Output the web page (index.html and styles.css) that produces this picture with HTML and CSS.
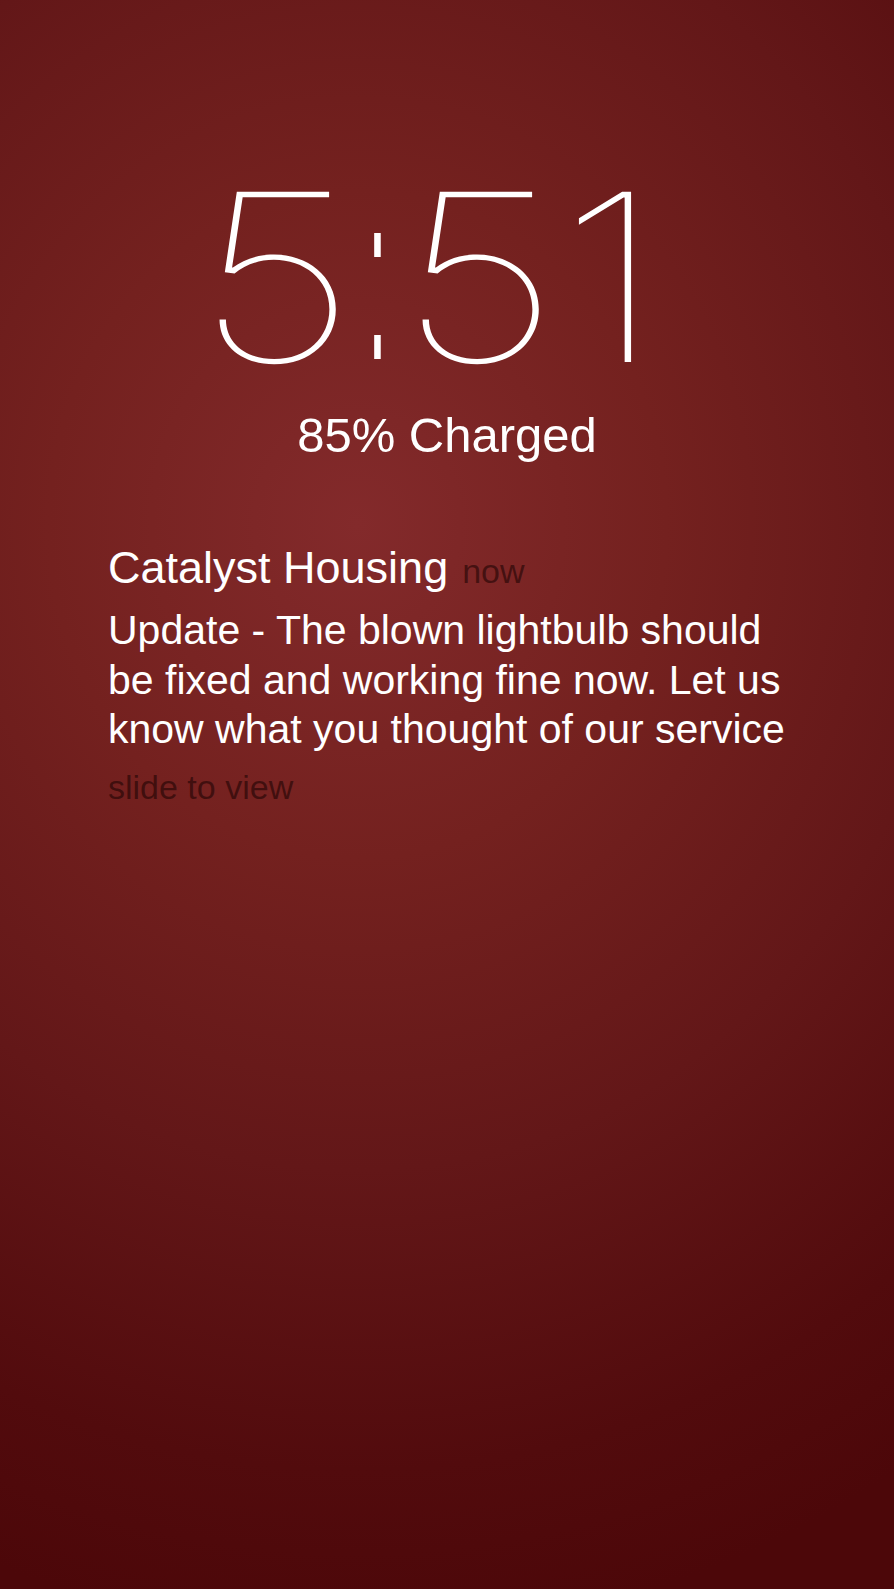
FILE: index.html
```html
<!DOCTYPE html>
<html lang="en">
<head>
<meta charset="utf-8">
<title>Lock screen</title>
<link rel="stylesheet" href="styles.css">
</head>
<body>
<main class="lock">
  <div class="clock"><span class="d">5</span><span class="colon">:</span><span class="d">5</span><span class="d">1</span></div>
  <div class="battery">85% Charged</div>
  <section class="notification">
    <div class="head">
      <span class="app">Catalyst Housing</span>
      <span class="time">now</span>
    </div>
    <p class="message">Update - The blown lightbulb should<br>be fixed and working fine now. Let us<br>know what you thought of our service</p>
    <div class="slide">slide to view</div>
  </section>
</main>
</body>
</html>
```
FILE: styles.css
```css
html, body {
  margin: 0;
  padding: 0;
}
body {
  width: 894px;
  height: 1589px;
  overflow: hidden;
  background: radial-gradient(ellipse 115% 70% at 40% 33%, #832a2b 0%, #74211f 30%, #631718 58%, #520b0d 85%, #4c0709 100%);
  font-family: "Liberation Sans", Arial, sans-serif;
  color: #fff;
}
.lock {
  display: flex;
  flex-direction: column;
  padding-top: 157px;
}
.clock {
  display: flex;
  align-items: flex-start;
  height: 240px;
  padding-left: 210px;
  font-family: "Inter", "Roboto", sans-serif;
  font-weight: 100;
  font-size: 234px;
  line-height: 240px;
}
.d {
  display: block;
  width: 132px;
  text-align: center;
  transform: scaleX(1.22);
}
.colon {
  display: block;
  width: 71px;
  margin-top: 99px;
  text-align: center;
  font-family: "Liberation Sans", Arial, sans-serif;
  font-weight: 400;
  font-size: 68px;
  line-height: 68px;
  transform: scale(1, 3.5);
  transform-origin: 50% 40px;
}
.battery {
  margin-top: 10px;
  text-align: center;
  font-size: 49px;
  line-height: 56px;
}
.notification {
  margin-top: 80px;
  padding-left: 108px;
}
.head {
  display: flex;
  align-items: baseline;
  gap: 14px;
  line-height: 50px;
}
.app {
  font-size: 45px;
}
.time {
  font-size: 34px;
  color: rgba(20, 0, 0, 0.55);
}
.message {
  margin: 10px 0 0;
  font-size: 41px;
  line-height: 49.5px;
  white-space: nowrap;
}
.slide {
  margin-top: 12px;
  font-size: 34px;
  line-height: 40px;
  color: rgba(20, 0, 0, 0.55);
}
```
